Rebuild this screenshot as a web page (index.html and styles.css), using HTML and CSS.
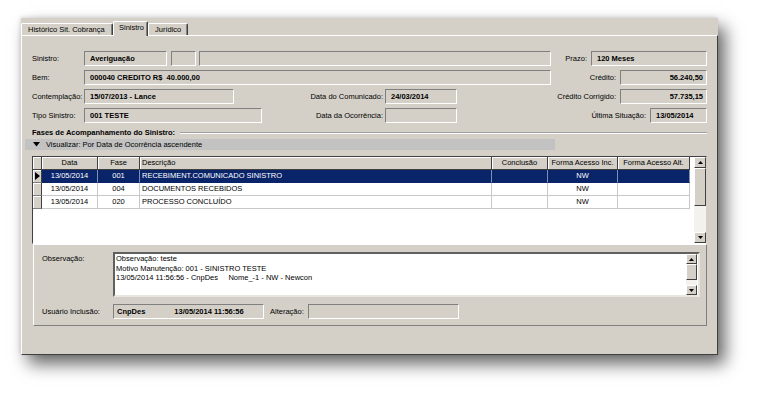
FILE: index.html
```html
<!DOCTYPE html>
<html lang="pt-BR">
<head>
<meta charset="utf-8">
<title>Sinistro</title>
<link rel="stylesheet" href="styles.css">
</head>
<body>
<div class="window">
  <div class="tabs">
    <div class="tab first">Histórico Sit. Cobrança</div>
    <div class="tab active">Sinistro</div>
    <div class="tab third">Jurídico</div>
  </div>
  <div class="page">
    <div class="row">
      <div class="lbl">Sinistro:</div>
      <div class="fld w83">Averiguação</div>
      <div class="fld w25 ml4"></div>
      <div class="fld w352 ml3"></div>
      <div class="lbl r w40">Prazo:</div>
      <div class="fld w116">120 Meses</div>
    </div>
    <div class="row">
      <div class="lbl">Bem:</div>
      <div class="fld w467">000040 CREDITO R$&nbsp; 40.000,00</div>
      <div class="lbl r w69">Crédito:</div>
      <div class="fld num w87">56.240,50</div>
    </div>
    <div class="row">
      <div class="lbl">Contemplação:</div>
      <div class="fld w150">15/07/2013 - Lance</div>
      <div class="lbl r w151 p2">Data do Comunicado:</div>
      <div class="fld w72">24/03/2014</div>
      <div class="lbl r w163">Crédito Corrigido:</div>
      <div class="fld num w87">57.735,15</div>
    </div>
    <div class="row">
      <div class="lbl">Tipo Sinistro:</div>
      <div class="fld w178">001 TESTE</div>
      <div class="lbl r w123 p2">Data da Ocorrência:</div>
      <div class="fld w72"></div>
      <div class="lbl r w193">Última Situação:</div>
      <div class="fld w57">13/05/2014</div>
    </div>

    <div class="group-title"><span>Fases de Acompanhamento do Sinistro:</span><i class="etch"></i></div>

    <div class="viewbar">
      <svg class="tri" width="7" height="5" viewBox="0 0 7 5"><path d="M0 0H7L3.5 4.5Z" fill="#000"/></svg>
      <span>Visualizar: Por Data de Ocorrência ascendente</span>
    </div>

    <div class="grid">
      <div class="table">
        <div class="gr head">
          <div class="gc ind"></div>
          <div class="gc c1">Data</div>
          <div class="gc c2">Fase</div>
          <div class="gc c3 left">Descrição</div>
          <div class="gc c4">Conclusão</div>
          <div class="gc c5">Forma Acesso Inc.</div>
          <div class="gc c6">Forma Acesso Alt.</div>
        </div>
        <div class="gr sel">
          <div class="gc ind"><svg width="5" height="8" viewBox="0 0 5 8"><path d="M0 0L5 4L0 8Z" fill="#000"/></svg></div>
          <div class="gc c1">13/05/2014</div>
          <div class="gc c2">001</div>
          <div class="gc c3 left">RECEBIMENT.COMUNICADO SINISTRO</div>
          <div class="gc c4"></div>
          <div class="gc c5">NW</div>
          <div class="gc c6"></div>
        </div>
        <div class="gr">
          <div class="gc ind"></div>
          <div class="gc c1">13/05/2014</div>
          <div class="gc c2">004</div>
          <div class="gc c3 left">DOCUMENTOS RECEBIDOS</div>
          <div class="gc c4"></div>
          <div class="gc c5">NW</div>
          <div class="gc c6"></div>
        </div>
        <div class="gr">
          <div class="gc ind"></div>
          <div class="gc c1">13/05/2014</div>
          <div class="gc c2">020</div>
          <div class="gc c3 left">PROCESSO CONCLUÍDO</div>
          <div class="gc c4"></div>
          <div class="gc c5">NW</div>
          <div class="gc c6"></div>
        </div>
      </div>
      <div class="vscroll big">
        <div class="sbtn"><svg width="5" height="3" viewBox="0 0 5 3"><path d="M0 3H5L2.5 0Z" fill="#000"/></svg></div>
        <div class="thumb"></div>
        <div class="track"></div>
        <div class="sbtn"><svg width="5" height="3" viewBox="0 0 5 3"><path d="M0 0H5L2.5 3Z" fill="#000"/></svg></div>
      </div>
    </div>

    <div class="detail">
      <div class="obs-row">
        <div class="dlbl">Observação:</div>
        <div class="memo">
          <div class="memo-text">
            <div>Observação: teste</div>
            <div>Motivo Manutenção: 001 - SINISTRO TESTE</div>
            <div>13/05/2014 11:56:56 - CnpDes&nbsp;&nbsp;&nbsp;&nbsp; Nome_-1 - NW - Newcon</div>
          </div>
          <div class="vscroll small">
            <div class="sbtn"><svg width="5" height="3" viewBox="0 0 5 3"><path d="M0 3H5L2.5 0Z" fill="#000"/></svg></div>
            <div class="thumb"></div>
            <div class="track"></div>
            <div class="sbtn"><svg width="5" height="3" viewBox="0 0 5 3"><path d="M0 0H5L2.5 3Z" fill="#000"/></svg></div>
          </div>
        </div>
      </div>
      <div class="user-row">
        <div class="dlbl">Usuário Inclusão:</div>
        <div class="fld w151 user"><span>CnpDes</span><span class="ts">13/05/2014 11:56:56</span></div>
        <div class="alt-lbl">Alteração:</div>
        <div class="fld w151"></div>
      </div>
    </div>
  </div>
</div>
</body>
</html>
```

FILE: styles.css
```css
* { box-sizing: border-box; }

html, body {
  margin: 0;
  background: #fff;
}

body {
  width: 760px;
  height: 398px;
  overflow: hidden;
  font-family: "Liberation Sans", Arial, sans-serif;
  font-size: 7.5px;
  color: #000;
}

.window {
  margin: 18px 0 0 21px;
  width: 697px;
  height: 337px;
  background: #d4d0c8;
  display: flex;
  flex-direction: column;
  box-shadow: 7px 9px 16px rgba(0, 0, 0, 0.6), -1px -1px 4px rgba(0, 0, 0, 0.12);
}

/* Tabs */
.tabs {
  height: 17px;
  display: flex;
  align-items: flex-end;
  position: relative;
  z-index: 1;
}

.tab {
  height: 12px;
  line-height: 11px;
  border-top: 1px solid #fff;
  border-left: 1px solid #fff;
  border-right: 1px solid #404040;
  box-shadow: inset -1px 0 0 #808080;
  border-radius: 2px 2px 0 0;
  white-space: nowrap;
}

.tab.first { width: 92px; padding-left: 6px; }
.tab.active {
  width: 35px;
  height: 15px;
  margin-bottom: -1px;
  padding-left: 5px;
  line-height: 12px;
  background: #d4d0c8;
}
.tab.third { width: 40px; padding-left: 6px; }

/* Page */
.page {
  flex: 1;
  border-top: 1px solid #fff;
  border-left: 1px solid #fff;
  border-right: 1px solid #404040;
  border-bottom: 1px solid #404040;
  padding: 15px 10px 0 10px;
}

.row {
  display: flex;
  height: 15px;
  margin-bottom: 4px;
  align-items: center;
}

.lbl { width: 52px; white-space: nowrap; }
.lbl.r { text-align: right; padding-right: 4px; }
.lbl.p2 { padding-right: 2px; }

.fld {
  height: 15px;
  border: 1px solid;
  border-color: #808080 #fff #fff #808080;
  font-weight: bold;
  padding-left: 5px;
  line-height: 13px;
  white-space: nowrap;
  overflow: hidden;
}
.fld.num { text-align: right; padding-right: 3px; }

.w25 { width: 25px; }
.w40 { width: 40px; }
.w57 { width: 57px; }
.w69 { width: 69px; }
.w72 { width: 72px; }
.w83 { width: 83px; }
.w87 { width: 87px; }
.w116 { width: 116px; }
.w123 { width: 123px; }
.w150 { width: 150px; }
.w151 { width: 151px; }
.w163 { width: 163px; }
.w178 { width: 178px; }
.w193 { width: 193px; }
.w352 { width: 352px; }
.w467 { width: 467px; }
.ml3 { margin-left: 3px; }
.ml4 { margin-left: 4px; }

/* Group title */
.group-title {
  display: flex;
  align-items: center;
  height: 11px;
  margin-top: 1px;
  font-weight: bold;
  white-space: nowrap;
}
.etch {
  flex: 1;
  height: 2px;
  margin-left: 5px;
  border-top: 1px solid #a0a0a0;
  border-bottom: 1px solid #fff;
}

/* View bar */
.viewbar {
  margin: 1px 0 0 -7px;
  width: 530px;
  height: 11px;
  background: #c2c2c2;
  display: flex;
  align-items: center;
  padding-left: 8px;
}
.viewbar .tri { margin-right: 6px; }

/* Grid */
.grid {
  margin-top: 6px;
  height: 88px;
  width: 675px;
  display: flex;
  background: #fff;
  border-top: 1px solid #404040;
  border-left: 1px solid #404040;
  border-bottom: 1px solid #fff;
  border-right: 1px solid #d4d0c8;
}

.table { width: 657px; margin-right: 4px; }

.gr { display: flex; height: 13px; }

.gc {
  height: 13px;
  border-right: 1px solid #c8c8c8;
  border-bottom: 1px solid #c8c8c8;
  text-align: center;
  line-height: 12px;
  white-space: nowrap;
  overflow: hidden;
}
.gc.left { text-align: left; padding-left: 2px; }

.gc.ind {
  width: 9px;
  background: #d4d0c8;
  border-right: 1px solid #404040;
  border-bottom: 1px solid #808080;
  box-shadow: inset 1px 1px 0 #fff;
  display: flex;
  align-items: center;
  justify-content: center;
}
.c1 { width: 56px; }
.c2 { width: 42px; }
.c3 { width: 352px; }
.c4 { width: 56px; }
.c5 { width: 70px; }
.c6 { width: 72px; }

.head .gc {
  background: #d4d0c8;
  border-right: 1px solid #404040;
  border-bottom: 1px solid #404040;
  box-shadow: inset 1px 1px 0 #fff;
}

.sel .gc { background: #0a246a; color: #fff; border-right-color: #7f8fb5; border-bottom-color: #0a246a; }
.sel .gc.ind { background: #d4d0c8; border-right-color: #404040; border-bottom-color: #808080; }

/* Scrollbars */
.vscroll {
  display: flex;
  flex-direction: column;
  background: #eeebe5;
}
.vscroll.big { width: 12px; }
.vscroll.small { width: 11px; margin: 0 1px 0 auto; }

.sbtn {
  height: 11px;
  background: #d4d0c8;
  border: 1px solid;
  border-color: #fff #404040 #404040 #fff;
  display: flex;
  align-items: center;
  justify-content: center;
}
.small .sbtn { height: 10px; }

.thumb {
  height: 38px;
  background: #d4d0c8;
  border: 1px solid;
  border-color: #fff #404040 #404040 #fff;
}
.small .thumb { height: 16px; }

.track {
  flex: 1;
  background-color: #f4f2ee;
}

/* Detail panel */
.detail {
  margin-left: 1px;
  width: 674px;
  height: 82px;
  border: 1px solid;
  border-color: #fff #808080 #808080 #fff;
  padding: 7px 0 0 8px;
}

.obs-row { display: flex; height: 45px; }

.dlbl { width: 71px; padding-top: 2px; white-space: nowrap; }

.memo {
  width: 587px;
  height: 45px;
  background: #fff;
  border: 2px solid;
  border-color: #606060 #e8e6e0 #e8e6e0 #606060;
  display: flex;
}

.memo-text {
  padding-left: 1px;
  line-height: 9.5px;
  white-space: nowrap;
}

.user-row {
  display: flex;
  align-items: center;
  height: 15px;
  margin-top: 7px;
}
.user-row .dlbl { padding-top: 0; }

.fld.user { padding-left: 3px; display: flex; }
.fld.user .ts { margin-left: 29px; }

.alt-lbl { margin-left: 6px; width: 38px; }
```
